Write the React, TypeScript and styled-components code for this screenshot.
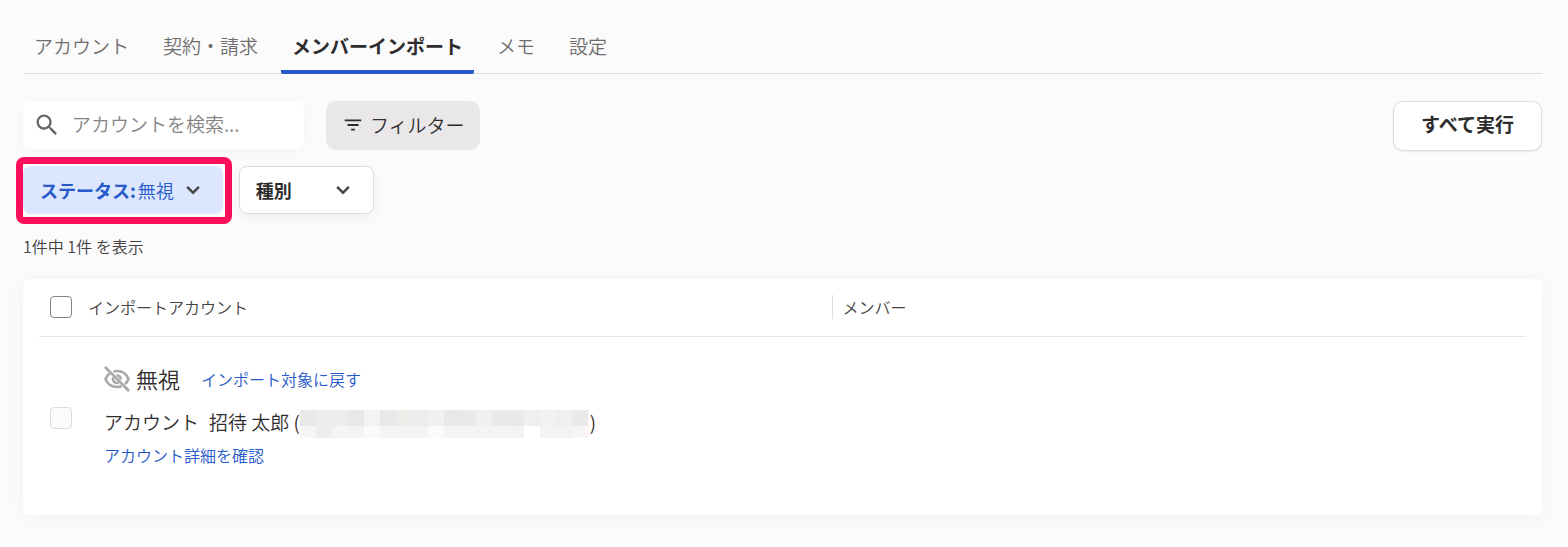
import React from "react";
import styled, { createGlobalStyle } from "styled-components";

const GlobalStyle = createGlobalStyle`
  *, *::before, *::after { box-sizing: border-box; }
  body {
    margin: 0;
    background: #fbfbfb;
    color: #2e2c2d;
    font-family: "Noto Sans CJK JP", sans-serif;
    font-size: 16px;
    line-height: 24px;
    font-weight: 350;
  }
  button, input, select { font: inherit; color: inherit; margin: 0; }
`;

const Page = styled.main`
  padding: 20px 26px 32px 23px;
`;

const Tabs = styled.nav`
  display: flex;
  gap: 12px;
  border-bottom: 1px solid #dcdcdc;
`;

const Tab = styled.a<{ $active?: boolean }>`
  display: block;
  height: 54px;
  margin-bottom: -1px;
  padding: 0 11px;
  font-size: 19px;
  line-height: 52px;
  text-decoration: none;
  color: ${(p) => (p.$active ? "#2e2c2d" : "#706d6e")};
  font-weight: ${(p) => (p.$active ? 700 : 350)};
  background: linear-gradient(#2659c9, #2659c9) bottom / 100% ${(p) => (p.$active ? "4px" : "0")} no-repeat;
  border-radius: 2px;
`;

const Toolbar = styled.div`
  display: flex;
  align-items: flex-start;
  gap: 22px;
  margin-top: 27px;
`;

const SearchBox = styled.label`
  display: flex;
  align-items: center;
  gap: 11px;
  width: 281px;
  height: 48px;
  padding: 0 10px;
  border-radius: 8px;
  background: #fff;
  box-shadow: 0 2px 16px rgba(0, 0, 0, 0.03);
  color: #666;
`;

const SearchInput = styled.input`
  flex: 1;
  min-width: 0;
  height: 32px;
  padding: 0 0 3px;
  border: 0;
  outline: 0;
  background: transparent;
  font-size: 19px;
  &::placeholder { color: #858384; opacity: 1; }
`;

const FilterButton = styled.button`
  display: flex;
  align-items: center;
  gap: 6px;
  height: 49px;
  padding: 0 15px 2px 16px;
  border: 0;
  border-radius: 10px;
  background: #e9e7e8;
  font-size: 19px;
`;

const RunButton = styled.button`
  height: 50px;
  margin-left: auto;
  padding: 0 27px 4px;
  border: 1px solid #dcdcdc;
  border-radius: 10px;
  background: #fff;
  box-shadow: 0 1px 2px rgba(0, 0, 0, 0.08);
  font-size: 19px;
  font-weight: 700;
`;

const Chips = styled.div`
  display: flex;
  gap: 16px;
  margin-top: 15px;
`;

const Chip = styled.label<{ $selected?: boolean }>`
  position: relative;
  display: flex;
  align-items: center;
  gap: 2px;
  height: 48px;
  padding-left: ${(p) => (p.$selected ? "17px" : "16px")};
  border: ${(p) => (p.$selected ? "0" : "1px solid #dcdcdc")};
  border-radius: 8px;
  background: ${(p) => (p.$selected ? "#dce7ff" : "#fff")};
  box-shadow: ${(p) => (p.$selected ? "none" : "0 4px 14px rgba(0, 0, 0, 0.05)")};
  color: ${(p) => (p.$selected ? "#2659c9" : "#2e2c2d")};
  font-size: 18px;
`;

const ChipName = styled.span`
  font-weight: 700;
`;

const ChipSelect = styled.select<{ $wide?: boolean }>`
  appearance: none;
  height: 46px;
  padding: 0 ${(p) => (p.$wide ? "81px" : "49px")} 0 0;
  border: 0;
  outline: 0;
  background: transparent;
  font-weight: ${(p) => (p.$wide ? 700 : 350)};
`;

const ChipArrow = styled.svg`
  position: absolute;
  right: 17px;
  pointer-events: none;
  color: #444243;
`;

const Highlight = styled.span`
  position: absolute;
  inset: -9px -9px -10px -7px;
  border: 7px solid #ff0f5b;
  border-radius: 8px;
  pointer-events: none;
`;

const Count = styled.p`
  margin: 20px 0 21px;
  color: #444243;
`;

const Card = styled.section`
  padding: 0 16px 16px;
  border-radius: 6px;
  background: #fff;
  box-shadow: 0 2px 24px rgba(0, 0, 0, 0.04);
`;

const Table = styled.table`
  width: 100%;
  table-layout: fixed;
  border-collapse: collapse;
`;

const CheckColumn = styled.col`
  width: 49px;
`;

const AccountColumn = styled.col`
  width: 50%;
`;

const HeadCell = styled.th`
  height: 57px;
  padding: 0;
  border-bottom: 1px solid #e6e6e6;
  text-align: left;
  font-weight: 350;
  color: #444243;
`;

const Divided = styled.div`
  padding-left: 10px;
  border-left: 1px solid #dcdcdc;
`;

const CheckCell = styled.td`
  padding: 0;
`;

const Checkbox = styled.input`
  appearance: none;
  display: block;
  width: 22px;
  height: 22px;
  margin-left: 11px;
  border: 1px solid #858384;
  border-radius: 4px;
  background: #fff;
  &:disabled { border-color: #dcdcdc; background: #fbfbfb; }
`;

const AccountCell = styled.td`
  padding: 24px 0 32px 16px;
`;

const StatusLine = styled.div`
  display: flex;
  align-items: center;
  height: 36px;
`;

const StatusText = styled.span`
  margin: 0 21px 2px 6px;
  font-size: 22px;
`;

const NameLine = styled.div`
  display: flex;
  align-items: center;
  height: 32px;
  margin: 9px 0 5px;
  font-size: 19px;
`;

const AccountKind = styled.span`
  margin-right: 10px;
`;

const MaskedEmail = styled.svg`
  margin-top: 5px;
`;

const Link = styled.a`
  color: #2659c9;
  text-decoration: none;
`;

const topTones = ["#e9e9e9", "#eeeeee", "#eeedeb", "#e6e8ea", "#f3f3f3", "#e9e9e9", "#ecece9", "#ededed", "#f2eff3", "#e8e8e8", "#e9e9e9", "#f0f0ee", "#e9e9e9", "#e8eae9", "#f0eef0", "#f2f2f2", "#efefef", "#e9e9e9"];
const bottomTones = ["#f6f6f6", "#eeeeee", "#f5f5f5", "#f3f3f3", "#fafafa", "#f5f5f3", "#f4f4f4", "#f4f4f4", "#fbfbfb", "#f4f4f4", "#f5f5f5", "#f5f3f4", "#f4f4f4", "#f3f3f3", "#ffffff", "#f4f4f4", "#f3f3f3", "#f7f5f6"];

const Mosaic = () => (
  <MaskedEmail width="290" height="28" viewBox="0 0 290 28" shapeRendering="crispEdges" aria-hidden="true">
    <rect x="288" width="2" height="28" fill="#fcfbfa" />
    {topTones.map((c, i) => <rect key={i} x={i * 16} width="16" height="16" fill={c} />)}
    {bottomTones.map((c, i) => <rect key={i} x={i * 16} y="16" width="16" height="12" fill={c} />)}
  </MaskedEmail>
);

const Arrow = () => (
  <ChipArrow width="26" height="26" viewBox="0 0 24 24" fill="currentColor" stroke="currentColor" strokeWidth="0.4" aria-hidden="true">
    <path d="M16.59 8.59 12 13.17 7.41 8.59 6 10l6 6 6-6z" />
  </ChipArrow>
);

const tabs = ["アカウント", "契約・請求", "メンバーインポート", "メモ", "設定"];

export default function App() {
  return (
    <Page>
      <GlobalStyle />
      <Tabs>
        {tabs.map((t, i) => (
          <Tab key={t} href="#" $active={i === 2} aria-current={i === 2 ? "page" : undefined}>{t}</Tab>
        ))}
      </Tabs>
      <Toolbar>
        <SearchBox>
          <svg width="28" height="28" viewBox="0 0 24 24" fill="currentColor" aria-hidden="true">
            <path d="M15.5 14h-.79l-.28-.27A6.47 6.47 0 0 0 16 9.5 6.5 6.5 0 1 0 9.5 16c1.61 0 3.09-.59 4.23-1.57l.27.28v.79l5 4.99L20.49 19l-4.99-5zm-6 0C7.01 14 5 11.99 5 9.5S7.01 5 9.5 5 14 7.01 14 9.5 11.99 14 9.5 14z" />
          </svg>
          <SearchInput type="text" placeholder="アカウントを検索..." />
        </SearchBox>
        <FilterButton type="button">
          <svg width="22" height="22" viewBox="0 0 24 24" fill="currentColor" aria-hidden="true">
            <path d="M10 18h4v-2h-4v2zM3 6v2h18V6H3zm3 7h12v-2H6v2z" />
          </svg>
          フィルター
        </FilterButton>
        <RunButton type="button">すべて実行</RunButton>
      </Toolbar>
      <Chips>
        <Chip $selected>
          <ChipName>ステータス:</ChipName>
          <ChipSelect defaultValue="無視"><option>無視</option></ChipSelect>
          <Arrow />
          <Highlight />
        </Chip>
        <Chip>
          <ChipSelect $wide aria-label="種別" defaultValue="種別"><option>種別</option></ChipSelect>
          <Arrow />
        </Chip>
      </Chips>
      <Count>1件中 1件 を表示</Count>
      <Card>
        <Table>
          <colgroup>
            <CheckColumn />
            <AccountColumn />
            <col />
          </colgroup>
          <thead>
            <tr>
              <HeadCell><Checkbox type="checkbox" id="all" /></HeadCell>
              <HeadCell scope="col"><label htmlFor="all">インポートアカウント</label></HeadCell>
              <HeadCell scope="col"><Divided>メンバー</Divided></HeadCell>
            </tr>
          </thead>
          <tbody>
            <tr>
              <CheckCell><Checkbox type="checkbox" disabled aria-labelledby="name" /></CheckCell>
              <AccountCell>
                <StatusLine>
                  <svg width="26" height="26" viewBox="0 0 26 26" fill="none" stroke="#aaa8a9" strokeWidth="2.6" aria-hidden="true">
                    <path d="M9.500 5.500A13 13 0 0 1 13 5c5.500 0 9.500 3 11.500 8a12 12 0 0 1-3.500 5M17.500 20.200A13 13 0 0 1 13 21C7.500 21 3.500 18 1.500 13A12 12 0 0 1 5.500 7.600" />
                    <path d="M9.300 11.500a4 4 0 0 0 5.200 5.200M12.500 9.300a4 4 0 0 1 4.300 4.300" />
                    <path d="M1 1l24 24" />
                  </svg>
                  <StatusText>無視</StatusText>
                  <Link href="#">インポート対象に戻す</Link>
                </StatusLine>
                <NameLine id="name">
                  <AccountKind>アカウント</AccountKind>
                  <span>招待 太郎 (</span>
                  <Mosaic />
                  <span>)</span>
                </NameLine>
                <Link href="#">アカウント詳細を確認</Link>
              </AccountCell>
              <td />
            </tr>
          </tbody>
        </Table>
      </Card>
    </Page>
  );
}
